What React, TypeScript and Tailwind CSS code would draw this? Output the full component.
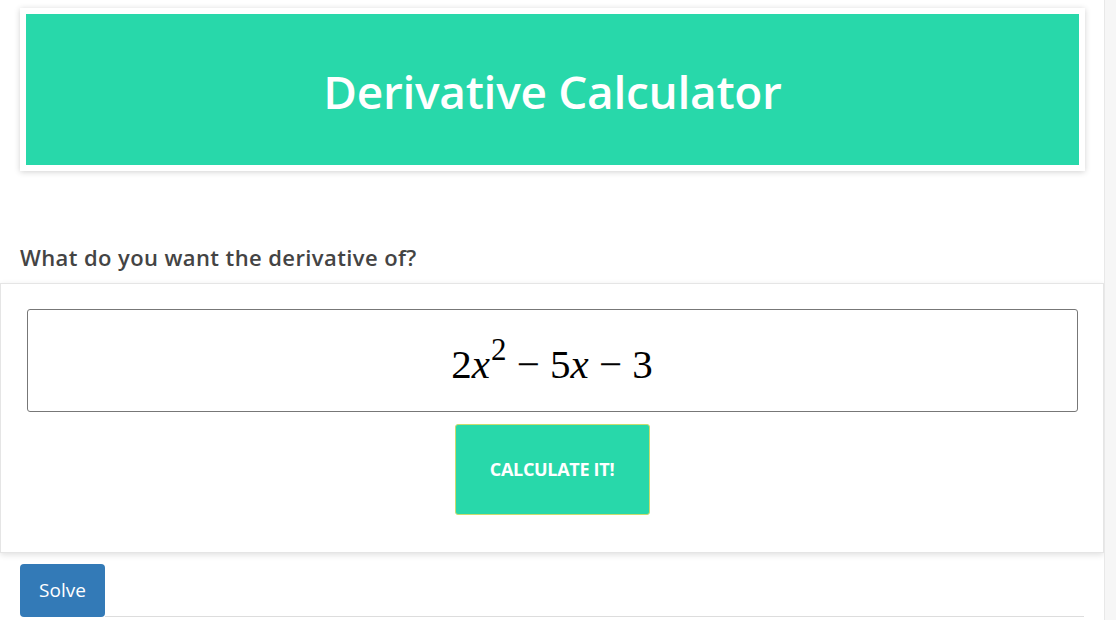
import React from "react";

export default function App() {
  return (
    <div className="flex w-[1116px] h-[620px] overflow-hidden bg-white" style={{ fontFamily: "'Open Sans', sans-serif" }}>
      <div className="w-[1104px] shrink-0 flex flex-col">
        <div className="pt-[8px] px-[20px]">
          <div className="w-[1065px] bg-white p-[6px] shadow-[0_1px_6px_rgba(0,0,0,0.18)]">
            <div className="h-[151px] bg-[#28d8aa] flex items-center justify-center">
              <h1 className="text-white text-[46px] font-semibold leading-none pt-[2px] tracking-[-0.3px]">Derivative Calculator</h1>
            </div>
          </div>
        </div>
        <div className="mt-[72px] px-[20px] h-[28px] text-[22px] font-semibold text-[#444] leading-[28px] tracking-[0.4px]">
          What do you want the derivative of?
        </div>
        <div className="mt-[12px] h-[270px] bg-white border border-[#e5e5e5] shadow-[0_2px_6px_rgba(0,0,0,0.12)] flex flex-col items-center pt-[25px]">
          <div className="w-[1051px] h-[103px] border border-[#777] rounded-[3px] flex items-center justify-center pt-[8px]">
            <span className="text-[41px] text-black leading-none" style={{ fontFamily: "'Liberation Serif', serif" }}>
              2<i>x</i><span className="text-[31px] relative -top-[18px] ml-[1px]">2</span> − 5<i>x</i> − 3
            </span>
          </div>
          <button className="mt-[12px] w-[195px] h-[91px] bg-[#28d8aa] border border-[#c9dc6e] rounded-[3px] text-white text-[18px] font-bold tracking-[-0.3px]">
            CALCULATE IT!
          </button>
        </div>
        <div className="mt-[11px] px-[20px] flex items-end">
          <button className="w-[85px] h-[53px] bg-[#337ab7] rounded-[4px] text-white text-[19px]">Solve</button>
          <div className="flex-1 h-[1px] bg-[#ddd]" />
        </div>
      </div>
      <div className="flex-1 bg-[#f6f6f6] border-l border-[#e8e8e8]" />
    </div>
  );
}
